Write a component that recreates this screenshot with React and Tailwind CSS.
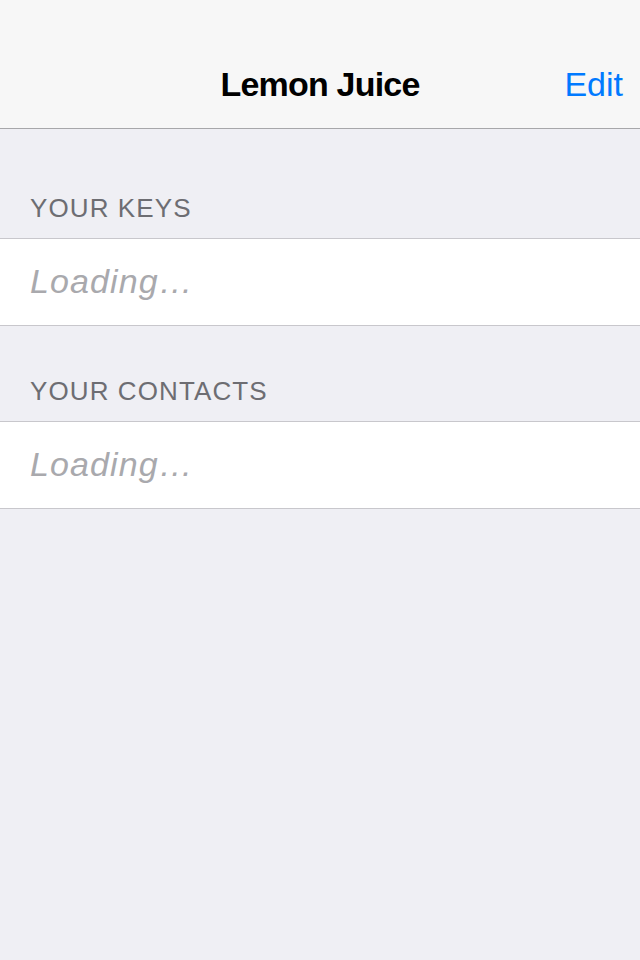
const font = { fontFamily: '"Liberation Sans", Arial, sans-serif' }

function SectionHeader({ title, top }) {
    return (
        <div className={`px-[30px] pb-[14px] ${top} text-[26px] leading-[32px] tracking-[1.1px] text-[#6d6d72]`}>
            {title}
        </div>
    )
}

function LoadingCell() {
    return (
        <div className="h-[88px] flex items-center px-[30px] bg-white border-y border-[#c8c7cc]">
            <span className="italic text-[34px] leading-[40px] tracking-[1.1px] text-[#a9a9ad] -mt-[3px]">Loading…</span>
        </div>
    )
}

export default function App() {
    return (
        <div style={font} className="min-h-[960px] w-[640px] bg-[#efeff4]">
            <div className="h-[129px] pt-[40px] bg-[#f7f7f7] border-b border-[#a7a7aa]">
                <div className="relative h-[88px] flex items-center justify-center">
                    <span className="text-[34px] font-bold tracking-[-0.8px] text-black">Lemon Juice</span>
                    <span className="absolute right-[17px] top-1/2 -translate-y-1/2 text-[34px] text-[#007aff]">Edit</span>
                </div>
            </div>
            <SectionHeader title="YOUR KEYS" top="pt-[63px]" />
            <LoadingCell />
            <SectionHeader title="YOUR CONTACTS" top="pt-[49px]" />
            <LoadingCell />
        </div>
    )
}
